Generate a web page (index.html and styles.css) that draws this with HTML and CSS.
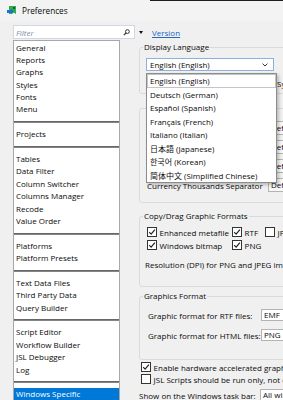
FILE: index.html
```html
<!DOCTYPE html>
<html lang="en">
<head>
<meta charset="utf-8">
<title>Preferences</title>
<link rel="stylesheet" href="styles.css">
</head>
<body>
<div class="titlebar">
  <svg class="app-icon" width="10" height="10" viewBox="0 0 10 10">
    <path d="M2 0 H9 V8 L6.5 6.5 L4 8 H2 Z" fill="#2fae4a"/>
    <path d="M0 4 L4.5 4 L4.5 2.5 L7 5.5 L4.5 8.5 L4.5 7 L0 7 Z" fill="#1e74c8"/>
    <rect x="6" y="1" width="2" height="2" fill="#1d5e2b"/>
  </svg>
  <span class="title">Preferences</span>
</div>

<div class="toprow">
  <div class="filter">
    <span class="ph">Filter</span>
    <svg class="search" width="7" height="7" viewBox="0 0 7 7">
      <circle cx="4.4" cy="2.6" r="1.9" fill="none" stroke="#333" stroke-width="1"/>
      <path d="M3 4 L0.8 6.2" stroke="#333" stroke-width="1.2"/>
    </svg>
  </div>
  <span class="filter-arrow"></span>
  <a class="version" href="#">Version</a>
</div>

<div class="main">
  <ul class="catlist">
    <li>General</li>
    <li>Reports</li>
    <li>Graphs</li>
    <li>Styles</li>
    <li>Fonts</li>
    <li>Menu</li>
    <li class="sep"></li>
    <li>Projects</li>
    <li class="sep"></li>
    <li>Tables</li>
    <li>Data Filter</li>
    <li>Column Switcher</li>
    <li>Columns Manager</li>
    <li>Recode</li>
    <li>Value Order</li>
    <li class="sep"></li>
    <li>Platforms</li>
    <li>Platform Presets</li>
    <li class="sep"></li>
    <li>Text Data Files</li>
    <li>Third Party Data</li>
    <li>Query Builder</li>
    <li class="sep"></li>
    <li>Script Editor</li>
    <li>Workflow Builder</li>
    <li>JSL Debugger</li>
    <li>Log</li>
    <li class="sep"></li>
    <li class="sel">Windows Specific</li>
  </ul>

  <div class="panel">
    <fieldset class="grp g-lang">
      <legend>Display Language</legend>
      <div class="combo-wrap">
        <div class="combo">
          <span>English (English)</span>
          <svg class="chev" width="6" height="4" viewBox="0 0 6 4"><path d="M0.6 0.6 L3 3 L5.4 0.6" fill="none" stroke="#333" stroke-width="1"/></svg>
        </div>
        <ul class="popup">
          <li class="focus">English (English)</li>
          <li>Deutsch (German)</li>
          <li>Español (Spanish)</li>
          <li>Français (French)</li>
          <li>Italiano (Italian)</li>
          <li lang="ja">日本語 (Japanese)</li>
          <li lang="ko">한국어 (Korean)</li>
          <li lang="zh-CN">简体中文 (Simplified Chinese)</li>
        </ul>
      </div>
      <div class="sysrow"><span class="sysgap"></span><span>System</span></div>
    </fieldset>

    <fieldset class="grp g-num">
      <legend class="hidden-legend"></legend>
      <div class="frow"><span class="flbl"></span><span class="inp">Def</span></div>
      <div class="frow"><span class="flbl"></span><span class="inp">Def</span></div>
      <div class="frow"><span class="flbl"></span><span class="inp">Def</span></div>
      <div class="frow"><span class="flbl">Currency Thousands Separator</span><span class="inp">Def</span></div>
    </fieldset>

    <fieldset class="grp g-copy">
      <legend>Copy/Drag Graphic Formats</legend>
      <div class="cbgrid">
        <label class="chk"><span class="cb on"><svg width="8" height="8" viewBox="0 0 8 8"><path d="M1.2 4.2 L3.1 6.1 L6.9 1.6" fill="none" stroke="#222" stroke-width="1.2"/></svg></span>Enhanced metafile</label>
        <label class="chk"><span class="cb on"><svg width="8" height="8" viewBox="0 0 8 8"><path d="M1.2 4.2 L3.1 6.1 L6.9 1.6" fill="none" stroke="#222" stroke-width="1.2"/></svg></span>RTF</label>
        <label class="chk"><span class="cb"></span>JPEG</label>
        <label class="chk"><span class="cb on"><svg width="8" height="8" viewBox="0 0 8 8"><path d="M1.2 4.2 L3.1 6.1 L6.9 1.6" fill="none" stroke="#222" stroke-width="1.2"/></svg></span>Windows bitmap</label>
        <label class="chk"><span class="cb on"><svg width="8" height="8" viewBox="0 0 8 8"><path d="M1.2 4.2 L3.1 6.1 L6.9 1.6" fill="none" stroke="#222" stroke-width="1.2"/></svg></span>PNG</label>
      </div>
      <div class="res">Resolution (DPI) for PNG and JPEG images:</div>
    </fieldset>

    <fieldset class="grp g-fmt">
      <legend>Graphics Format</legend>
      <div class="grow"><span class="glbl">Graphic format for RTF files:</span><span class="inp wide">EMF</span></div>
      <div class="grow"><span class="glbl">Graphic format for HTML files:</span><span class="inp wide">PNG</span></div>
    </fieldset>

    <label class="chk solo first"><span class="cb on"><svg width="8" height="8" viewBox="0 0 8 8"><path d="M1.2 4.2 L3.1 6.1 L6.9 1.6" fill="none" stroke="#222" stroke-width="1.2"/></svg></span>Enable hardware accelerated graphics</label>
    <label class="chk solo"><span class="cb"></span>JSL Scripts should be run only, not opened</label>
    <div class="taskrow"><span class="tlbl">Show on the Windows task bar:</span><span class="inp wide">All windows</span></div>
  </div>
</div>
</body>
</html>
```

FILE: styles.css
```css
html, body {
  margin: 0;
  padding: 0;
  width: 283px;
  height: 400px;
  overflow: hidden;
  background: #f0f0f0;
  font-family: "Open Sans", "Noto Sans CJK SC", sans-serif;
  font-size: 8px;
  color: #0a0a0a;
}

.titlebar {
  height: 21px;
  display: flex;
  align-items: center;
  padding-left: 7px;
  gap: 5px;
  background: linear-gradient(#1e1e1e, #1e1e1e) no-repeat 150px 0 / 133px 1px, #f3f3f3;
}
.app-icon { display: block; }
.title { font-size: 8.2px; color: #0a0a0a; }

.toprow {
  margin-top: 4px;
  height: 14px;
  display: flex;
  align-items: center;
  padding-left: 13px;
}
.filter {
  width: 122px;
  height: 14px;
  box-sizing: border-box;
  border: 1px solid #cfd8e3;
  background: #fff;
  display: flex;
  align-items: center;
  justify-content: space-between;
  padding: 0 4px 0 2px;
}
.ph { font-style: italic; color: #7c8ea6; }
.search { display: block; }
.filter-arrow {
  margin-left: 4px;
  width: 0;
  height: 0;
  border-left: 2.5px solid transparent;
  border-right: 2.5px solid transparent;
  border-top: 3.5px solid #111;
}
.version {
  margin-left: 9px;
  color: #2366c4;
  text-decoration: underline;
}

.main {
  display: flex;
  align-items: flex-start;
  padding-left: 13px;
}

.catlist {
  list-style: none;
  margin: 1px 0 0 0;
  padding: 0.5px 0 0 0;
  width: 107px;
  height: 400px;
  box-sizing: border-box;
  border: 1px solid #a8a8a8;
  background: #fff;
  flex: none;
}
.catlist li {
  height: 12.4px;
  line-height: 12.4px;
  padding-left: 2px;
  white-space: nowrap;
}
.catlist li.sep {
  background: linear-gradient(#666, #666) no-repeat 0 50% / 100% 1.8px;
}
.catlist li.sel {
  background: #0078d7;
  color: #fff;
}

.panel {
  margin-left: 19px;
  padding-top: 2px;
  width: 144px;
  flex: none;
  white-space: nowrap;
  overflow: hidden;
}

.grp {
  margin: 0 -60px 0 0;
  border: 1px solid #dadada;
  border-radius: 3px;
  padding: 0 0 0 3px;
  min-width: 0;
}
.grp legend {
  padding: 0 1px;
  line-height: 12px;
  height: 12px;
}
.grp legend.hidden-legend { padding: 0; }

.g-lang { padding-top: 5px; padding-bottom: 3px; }
.combo-wrap {
  position: relative;
  margin-left: 3px;
  width: 128px;
}
.combo {
  height: 13px;
  box-sizing: border-box;
  border: 1px solid #8db0de;
  background: #fff;
  display: flex;
  align-items: center;
  justify-content: space-between;
  padding: 0 5px 0 3px;
}
.chev { display: block; }
.popup {
  position: absolute;
  z-index: 10;
  top: 15px;
  left: 0;
  width: 129px;
  margin: 0;
  padding: 0;
  list-style: none;
  background: #fff;
  border: 1px solid #8c8c8c;
  box-shadow: 2px 2px 3px rgba(0, 0, 0, 0.22);
}
.popup li {
  height: 13.5px;
  line-height: 13.5px;
  padding-left: 3px;
}
.popup li:lang(ja) { font-family: "Open Sans", "Noto Sans CJK JP", sans-serif; }
.popup li:lang(ko) { font-family: "Open Sans", "Noto Sans CJK KR", sans-serif; }
.popup li.focus { box-shadow: inset 0 0 0 1px #c4c4c4; }

.sysrow {
  margin-top: 6px;
  height: 13px;
  line-height: 13px;
  display: flex;
}
.sysgap { width: 134px; flex: none; }

.g-num { margin-top: 8px; padding-top: 7px; padding-bottom: 10px; }
.frow {
  display: flex;
  align-items: center;
  height: 14px;
}
.frow + .frow { margin-top: 5px; }
.flbl { width: 125px; flex: none; padding-left: 4px; box-sizing: border-box; }
.inp {
  height: 14px;
  box-sizing: border-box;
  border: 1px solid #b4b4b4;
  background: #f7f7f7;
  padding: 0 2px;
  line-height: 12px;
  width: 40px;
  flex: none;
}

.g-copy { margin-top: 7px; padding-top: 4px; padding-bottom: 15px; }
.cbgrid {
  margin-left: 4px;
  display: grid;
  grid-template-columns: 85px 33px auto;
  row-gap: 1.3px;
}
.chk {
  display: flex;
  align-items: center;
  height: 12px;
  gap: 2.6px;
}
.cb {
  width: 10px;
  height: 10px;
  box-sizing: border-box;
  border: 1px solid #333;
  background: #fff;
  display: flex;
  align-items: center;
  justify-content: center;
  flex: none;
}
.cb svg { display: block; }
.res { margin-top: 8px; height: 12px; line-height: 12px; padding-left: 2px; }

.g-fmt { margin-top: 3px; padding-top: 7px; padding-bottom: 18px; }
.grow {
  display: flex;
  align-items: center;
  height: 12px;
  margin-left: 5px;
}
.grow + .grow { margin-top: 8px; }
.glbl { width: 113px; flex: none; }
.inp.wide { height: 12px; line-height: 10px; width: 40px; background: #fff; }

.chk.solo { margin-left: 2px; }
.chk.solo.first { margin-top: 1px; }
.chk.solo + .chk.solo { margin-top: 0.2px; }
.taskrow {
  margin-top: 4px;
  display: flex;
  align-items: center;
  height: 13px;
}
.tlbl { width: 121px; flex: none; }
.taskrow .inp.wide { height: 13px; }
```
